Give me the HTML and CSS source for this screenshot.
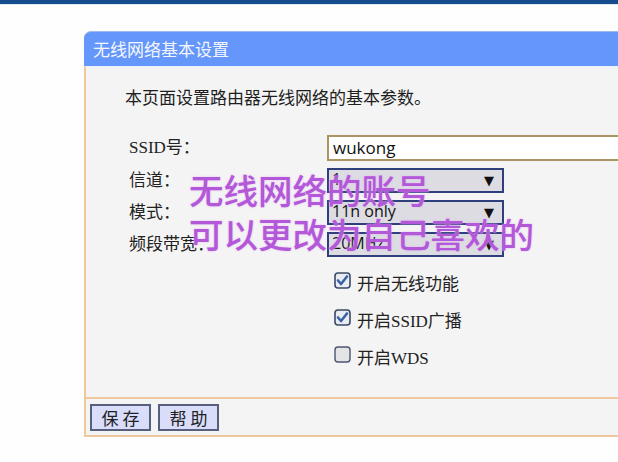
FILE: index.html
```html
<!DOCTYPE html>
<html lang="zh-CN">
<head>
<meta charset="utf-8">
<title>无线网络基本设置</title>
<link rel="stylesheet" href="styles.css">
</head>
<body>
<div class="topbar"></div>
<div class="panel">
  <div class="panel-head">无线网络基本设置</div>
  <div class="panel-body">
    <p class="intro">本页面设置路由器无线网络的基本参数。</p>
    <div class="form">
      <div class="label">SSID号：</div>
      <div class="field"><div class="input">wukong</div></div>
      <div class="label">信道：</div>
      <div class="field"><div class="select"><span>1</span><span class="arrow">▼</span></div></div>
      <div class="label">模式：</div>
      <div class="field"><div class="select"><span>11n only</span><span class="arrow">▼</span></div></div>
      <div class="label">频段带宽：</div>
      <div class="field"><div class="select"><span>20MHz</span><span class="arrow">▼</span></div></div>
    </div>
    <div class="checks">
      <div class="check">
        <svg class="box" width="17" height="17" viewBox="0 0 17 17"><rect x="1" y="1" width="15" height="15" rx="3" fill="#e9ecf2" stroke="#3b4a68" stroke-width="1.6"/><path d="M4 8.5 L7 12 L13 4.5" fill="none" stroke="#3a62a8" stroke-width="2.6" stroke-linecap="round" stroke-linejoin="round"/></svg>
        <span>开启无线功能</span>
      </div>
      <div class="check">
        <svg class="box" width="17" height="17" viewBox="0 0 17 17"><rect x="1" y="1" width="15" height="15" rx="3" fill="#e9ecf2" stroke="#3b4a68" stroke-width="1.6"/><path d="M4 8.5 L7 12 L13 4.5" fill="none" stroke="#3a62a8" stroke-width="2.6" stroke-linecap="round" stroke-linejoin="round"/></svg>
        <span>开启SSID广播</span>
      </div>
      <div class="check">
        <svg class="box" width="17" height="17" viewBox="0 0 17 17"><rect x="1" y="1" width="15" height="15" rx="3" fill="#e4e4e6" stroke="#4a5570" stroke-width="1.4"/></svg>
        <span>开启WDS</span>
      </div>
    </div>
  </div>
  <div class="panel-foot">
    <button class="btn">保 存</button>
    <button class="btn">帮 助</button>
  </div>
</div>
<div class="note">
  <div>无线网络的账号</div>
  <div>可以更改为自己喜欢的</div>
</div>
</body>
</html>
```
FILE: styles.css
```css
html, body {
  margin: 0;
  padding: 0;
  background: #fdfefd;
  overflow: hidden;
}
body {
  width: 618px;
  height: 462px;
  position: relative;
  font-family: "Liberation Serif", "Noto Sans CJK SC", serif;
  color: #222;
}
.topbar {
  height: 4px;
  background: #144c8e;
  border-bottom: 1px solid #dfe9f2;
}
.panel {
  margin-top: 26px;
  margin-left: 84px;
  width: 534px;
  overflow: hidden;
}
.panel-head {
  height: 35px;
  line-height: 34px;
  background: #6597fa;
  color: #f4f6ff;
  font-family: "Noto Sans CJK SC", sans-serif;
  font-size: 17px;
  padding-left: 9px;
  border-top-left-radius: 7px;
  border-top: 1px solid #9fbcf0;
  box-sizing: border-box;
}
.panel-body {
  background: #f4f4f4;
  border-left: 2px solid #f1c898;
  padding: 0 0 22px 0;
  border-top: 1px solid #e8f2fb;
}
.intro {
  margin: 0;
  padding: 20px 0 0 39px;
  line-height: 20px;
  font-size: 17px;
  font-family: "Noto Sans CJK SC", sans-serif;
  color: #1e1e1e;
}
.form {
  display: grid;
  grid-template-columns: 198px 1fr;
  grid-template-rows: 33px 32px 32px 32px;
  margin-top: 28px;
  padding-left: 43px;
}
.label {
  font-size: 17px;
  line-height: 26px;
  color: #222;
}
.field {
  align-self: start;
  min-width: 0;
}
.input {
  width: 320px;
  height: 26px;
  box-sizing: border-box;
  border: 2px solid #ab9563;
  background: #ffffff;
  font-family: "Open Sans", "Liberation Sans", sans-serif;
  font-size: 17px;
  line-height: 21px;
  padding-left: 4px;
  color: #111;
}
.select {
  width: 177px;
  height: 25px;
  box-sizing: border-box;
  border: 2px solid #2f3f7c;
  background: #dcdce2;
  display: flex;
  justify-content: space-between;
  align-items: center;
  padding: 0 8px 0 3px;
  font-family: "Open Sans", "Liberation Sans", sans-serif;
  font-size: 16px;
  line-height: 18px;
  color: #111;
}
.select span:first-child {
  margin-top: -4px;
}
.arrow {
  font-size: 13px;
  font-family: "DejaVu Sans", sans-serif;
  color: #111;
}
.checks {
  padding-left: 248px;
}
.check {
  height: 37px;
  display: flex;
  align-items: center;
  gap: 6px;
  font-size: 17px;
  color: #222;
}
.box {
  display: block;
  margin-top: -5px;
}
.panel-foot {
  background: #f4f4f4;
  border-top: 2px solid #efc79e;
  border-bottom: 2px solid #efc79e;
  border-left: 2px solid #f1c898;
  padding: 5px 0 4px 4px;
  display: flex;
  gap: 7px;
}
.btn {
  width: 61px;
  height: 27px;
  box-sizing: border-box;
  background: #d9ddfa;
  border: 2px solid #565f7e;
  font-family: "Noto Sans CJK SC", sans-serif;
  font-size: 17px;
  line-height: 20px;
  padding: 0;
  color: #222;
}
.note {
  position: absolute;
  left: 189px;
  top: 167px;
  font-family: "Noto Sans CJK SC", sans-serif;
  font-size: 34.5px;
  font-weight: 500;
  line-height: 44px;
  color: #b358d8;
  text-shadow: 0 0 2px #e0b0f2;
}
```
